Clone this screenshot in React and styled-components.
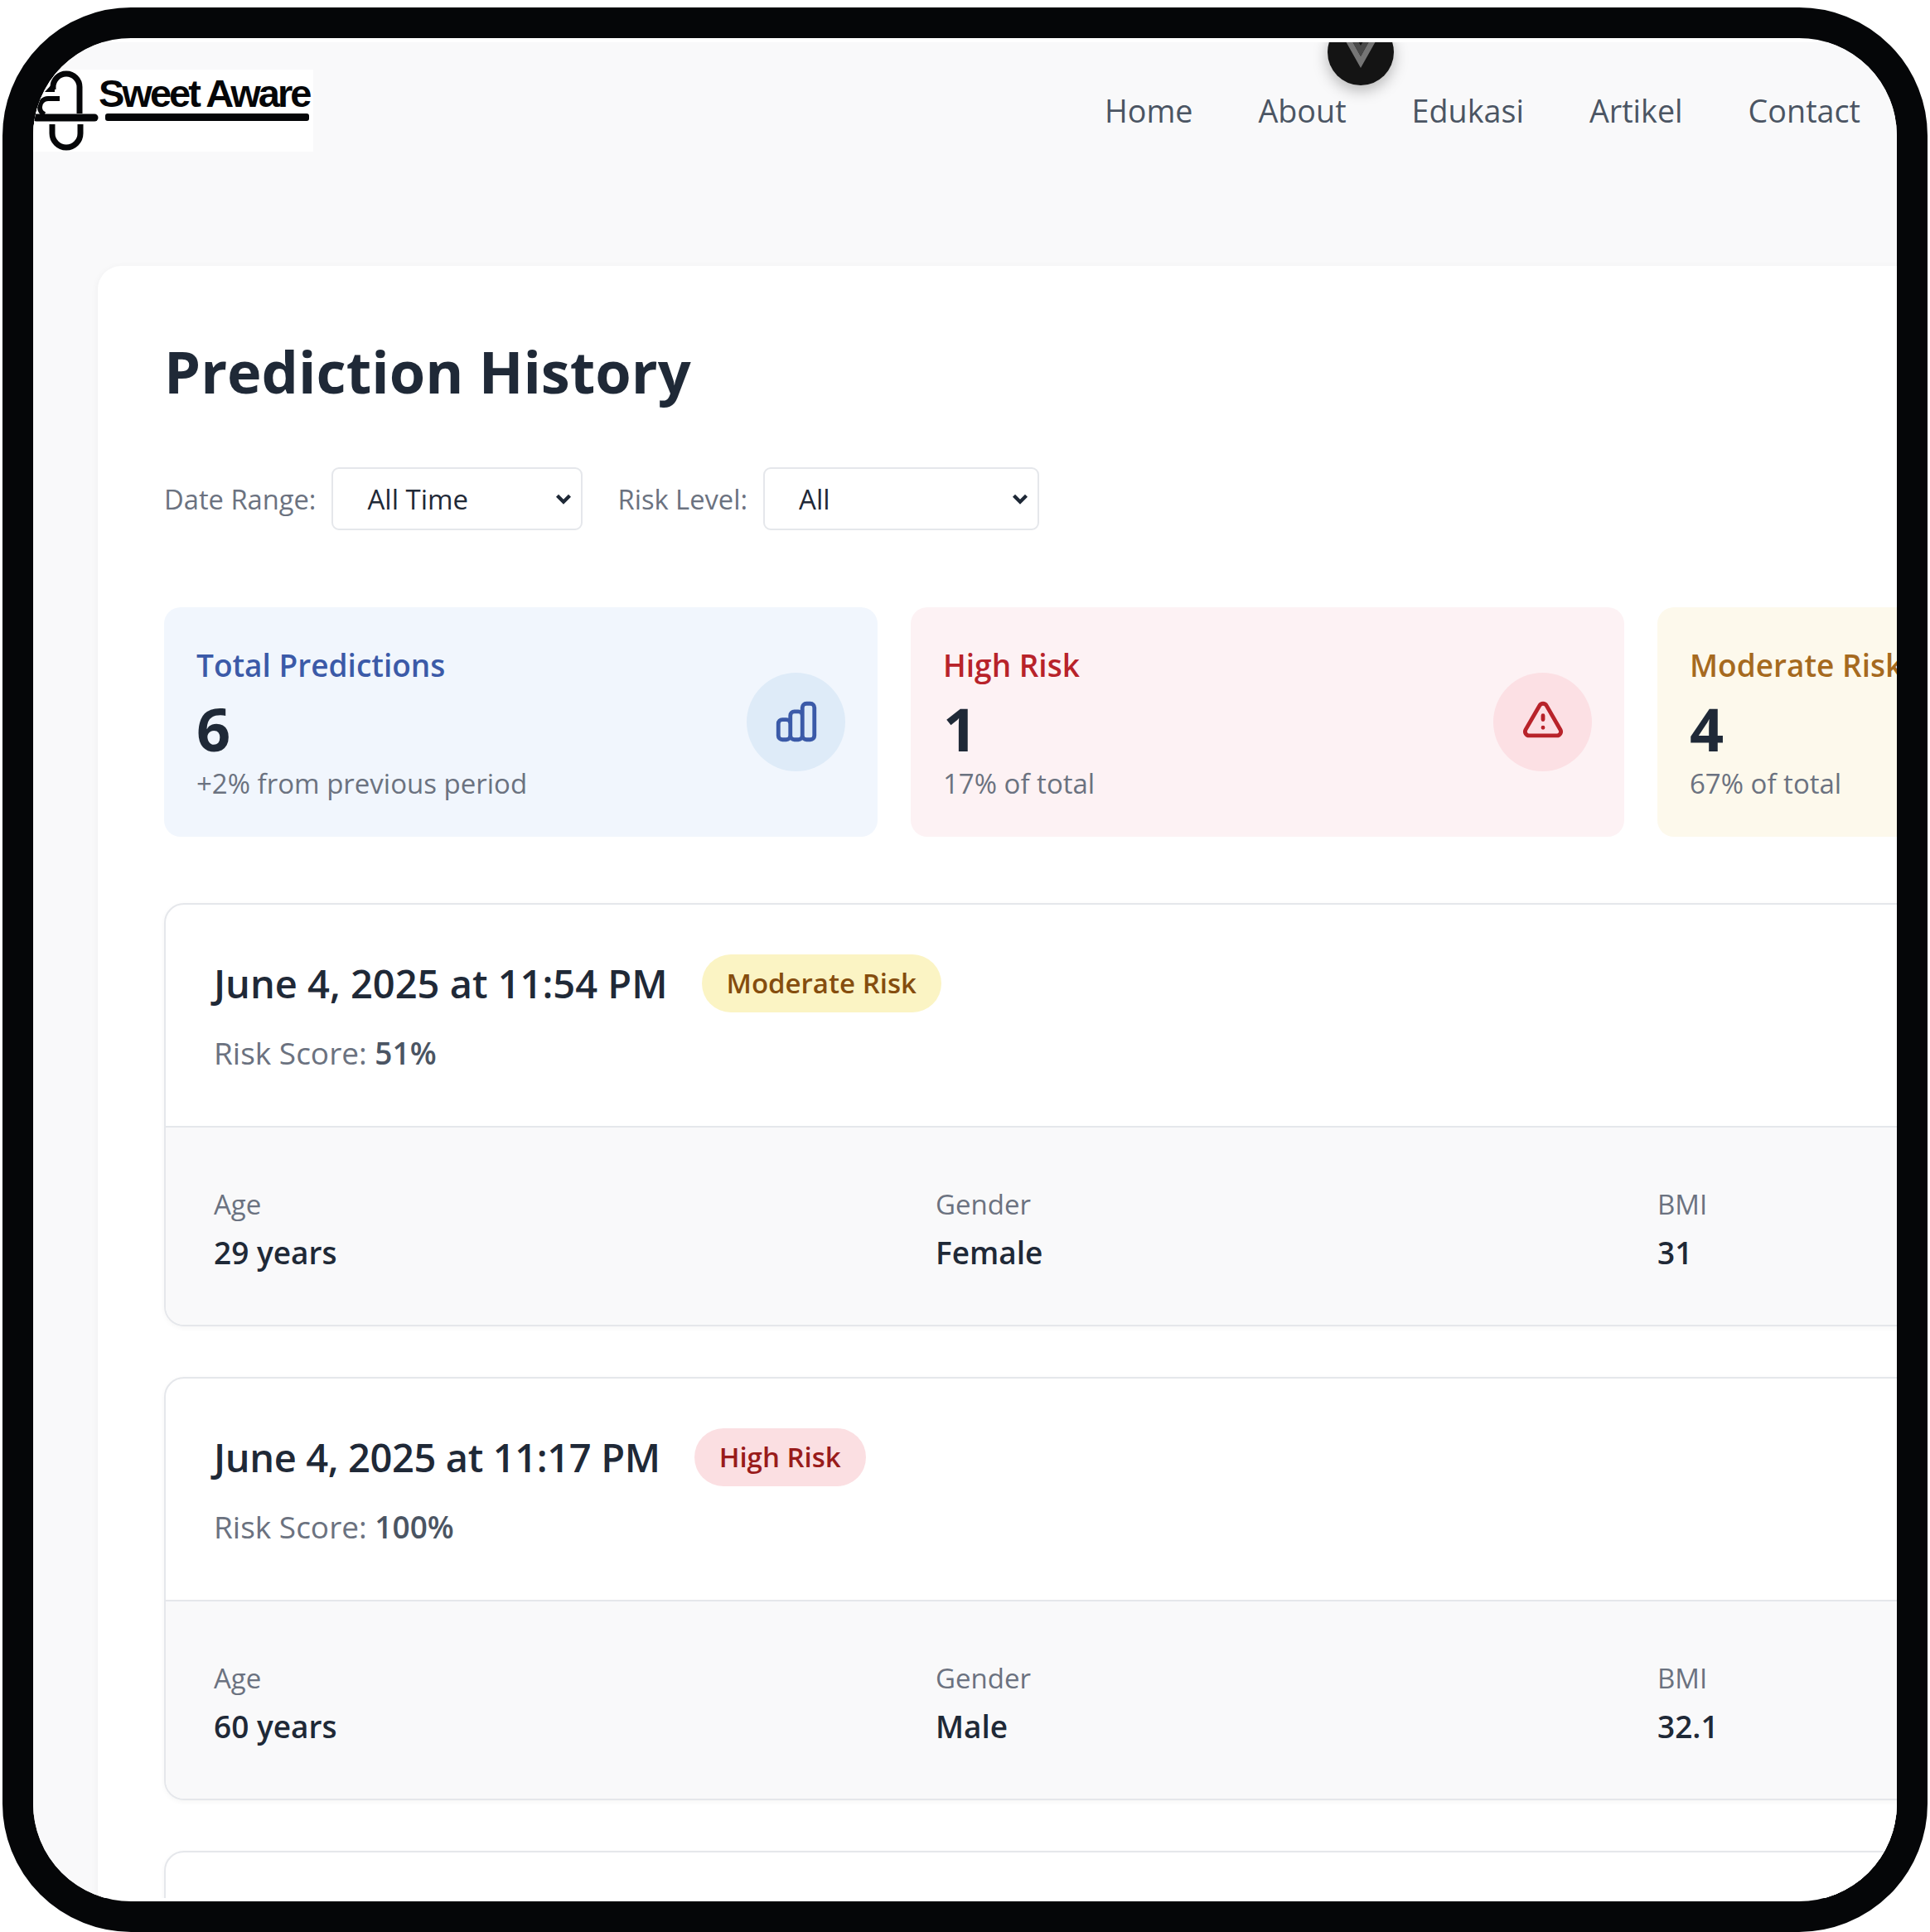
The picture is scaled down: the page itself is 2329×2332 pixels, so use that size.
import React from "react";
import styled, { createGlobalStyle } from "styled-components";

const GlobalStyle = createGlobalStyle`
  html, body {
    margin: 0;
    padding: 0;
    background: #fff;
    font-family: "Open Sans", "Noto Sans", sans-serif;
  }
  * {
    box-sizing: border-box;
  }
`;

const Frame = styled.div`
  width: 2323px;
  height: 2323px;
  margin: 9px 0 0 3px;
  border: 37px solid #050608;
  border-radius: 155px;
  background: #fff;
  padding: 5px 0 4px;
  overflow: hidden;
`;

const Screen = styled.div`
  position: relative;
  height: 100%;
  background: #f9f9fa;
  overflow: hidden;
`;

const DevToggle = styled.div`
  position: absolute;
  top: -28px;
  left: 1562px;
  width: 80px;
  height: 80px;
  border-radius: 50%;
  background: #141414;
  box-shadow: 0 6px 18px rgba(0, 0, 0, 0.28);
  display: flex;
  align-items: flex-end;
  justify-content: center;
  padding-bottom: 21px;
  z-index: 2;
`;

const Header = styled.header`
  display: flex;
  align-items: center;
  justify-content: space-between;
  height: 99px;
  margin: 33px 0 138px;
  padding-right: 44px;
`;

const Logo = styled.div`
  width: 338px;
  height: 99px;
  background: #fff;
  display: flex;
  align-items: flex-start;
`;

const LogoText = styled.div`
  margin-left: -2px;
  padding-top: 4px;
  font-family: "Liberation Sans", Arial, sans-serif;
  font-size: 47px;
  line-height: 50px;
  font-weight: 700;
  letter-spacing: -3px;
  color: #050608;
  white-space: nowrap;

  &::after {
    content: "";
    display: block;
    width: 246px;
    height: 9px;
    margin: -1px 0 0 8px;
    border-radius: 3px;
    background: #050608;
  }
`;

const Nav = styled.nav`
  display: flex;
  gap: 79px;
`;

const NavLink = styled.a`
  font-size: 37.7px;
  line-height: 50px;
  color: #4b5563;
  text-decoration: none;
`;

const MainCard = styled.main`
  width: 2823px;
  margin-left: 78px;
  padding: 87px 80px 80px;
  background: #fff;
  border-radius: 28px;
  box-shadow: 0 2px 10px rgba(0, 0, 0, 0.05);
`;

const Title = styled.h1`
  margin: 0 0 76px;
  font-size: 70.3px;
  line-height: 80px;
  font-weight: 700;
  color: #1f2937;
`;

const Filters = styled.div`
  display: flex;
  align-items: center;
  height: 76px;
  margin-bottom: 93px;
`;

const FilterLabel = styled.label`
  margin-right: 19px;
  font-size: 32.7px;
  color: #6b7280;
  white-space: nowrap;
`;

const Select = styled.select`
  appearance: none;
  width: ${(p) => p.$width}px;
  height: 76px;
  margin-right: 42px;
  padding: 0 0 0 41px;
  border: 2px solid #e5e7eb;
  border-radius: 9px;
  font-family: inherit;
  font-size: 33px;
  color: #1f2937;
  background: #fff url("data:image/svg+xml,%3Csvg xmlns='http://www.w3.org/2000/svg' viewBox='0 0 20 14'%3E%3Cpath d='M3 3l7 7 7-7' fill='none' stroke='%231f2937' stroke-width='4'/%3E%3C/svg%3E") no-repeat right 10px center / 22px 15px;
`;

const StatsGrid = styled.div`
  display: grid;
  grid-template-columns: repeat(3, 1fr);
  gap: 40px;
  margin-bottom: 80px;
`;

const StatCard = styled.section`
  display: flex;
  align-items: center;
  justify-content: space-between;
  padding: 46px 39px 42px;
  border-radius: 20px;
  background: ${(p) => p.$bg};
`;

const StatTitle = styled.div`
  font-size: 37px;
  line-height: 48px;
  font-weight: 600;
  color: ${(p) => p.$color};
`;

const StatValue = styled.div`
  margin: 8px 0 1px;
  font-size: 72px;
  line-height: 88px;
  font-weight: 700;
  color: #1f2937;
`;

const StatNote = styled.div`
  font-size: 33px;
  line-height: 44px;
  color: #6b7280;
`;

const StatIcon = styled.div`
  flex: none;
  width: 119px;
  height: 119px;
  margin-top: -5px;
  border-radius: 50%;
  display: flex;
  align-items: center;
  justify-content: center;
  background: ${(p) => p.$bg};
  color: ${(p) => p.$color};
`;

const List = styled.div`
  display: flex;
  flex-direction: column;
  gap: 61px;
`;

const PredictionCard = styled.article`
  min-height: 511px;
  border: 2px solid #e5e7eb;
  border-radius: 24px;
  background: #fff;
  box-shadow: 0 2px 6px rgba(0, 0, 0, 0.04);
  overflow: hidden;
`;

const CardHead = styled.div`
  padding: 60px 58px 64px;
  border-bottom: 2px solid #e5e7eb;
`;

const HeadRow = styled.div`
  display: flex;
  align-items: center;
  gap: 41px;
`;

const DateText = styled.h2`
  margin: 0;
  font-size: 47px;
  line-height: 70px;
  font-weight: 600;
  letter-spacing: ${(p) => p.$tracking}px;
  color: #1f2937;
`;

const Badge = styled.span`
  height: 70px;
  padding: 0 30px;
  border-radius: 35px;
  font-size: 33px;
  line-height: 70px;
  font-weight: 600;
  background: ${(p) => p.$bg};
  color: ${(p) => p.$color};
`;

const Score = styled.p`
  margin: 25px 0 0;
  font-size: 37px;
  line-height: 48px;
  color: #6b7280;

  strong {
    font-weight: 600;
    color: #4b5563;
  }
`;

const Details = styled.div`
  display: grid;
  grid-template-columns: repeat(3, 801px);
  gap: 70px;
  padding: 71px 58px 63px;
  background: #f9f9fa;
`;

const DetailLabel = styled.div`
  font-size: 33px;
  line-height: 44px;
  color: #6b7280;
`;

const DetailValue = styled.div`
  margin-top: 12px;
  font-size: 37px;
  line-height: 48px;
  font-weight: 600;
  color: #1f2937;
`;

const BarsIcon = () => (
  <svg width="58" height="58" viewBox="0 0 24 24" fill="none" stroke="currentColor" strokeWidth="2" strokeLinecap="round" strokeLinejoin="round">
    <path d="M9 19v-6a2 2 0 00-2-2H5a2 2 0 00-2 2v6a2 2 0 002 2h2a2 2 0 002-2zm0 0V9a2 2 0 012-2h2a2 2 0 012 2v10m-6 0a2 2 0 002 2h2a2 2 0 002-2m0 0V5a2 2 0 012-2h2a2 2 0 012 2v14a2 2 0 01-2 2h-2a2 2 0 01-2-2z" />
  </svg>
);

const AlertIcon = () => (
  <svg width="58" height="58" viewBox="0 0 24 24" fill="none" stroke="currentColor" strokeWidth="2" strokeLinecap="round" strokeLinejoin="round">
    <path d="M12 9v2m0 4h.01m-6.938 4h13.856c1.54 0 2.502-1.667 1.732-3L13.732 4c-.77-1.333-2.694-1.333-3.464 0L3.34 16c-.77 1.333.192 3 1.732 3z" />
  </svg>
);

const LogoMark = () => (
  <svg width="81" height="99" viewBox="40 84 81 99" fill="none" stroke="#050608" style={{ flex: "none" }}>
    <path d="M44 142H114" strokeWidth="9" strokeLinecap="round" />
    <path d="M63 150V161A17 17 0 0 0 97 161V150" strokeWidth="7" />
    <path d="M96 137V105A16 16 0 0 0 64 105V108" strokeWidth="7" />
    <path d="M72 119H58A10 10 0 0 0 48 129A9 9 0 0 0 54 138" strokeWidth="6" />
    <path d="M66 98V111H54Z" fill="#050608" stroke="none" />
  </svg>
);

const VueMark = () => (
  <svg width="36" height="32" viewBox="0 0 36 32">
    <path d="M0 0L18 32L36 0H28L18 18L8 0Z" fill="#757575" />
    <path d="M8 0L18 18L28 0H21L18 5L15 0Z" fill="#4a4a4a" />
  </svg>
);

const stats = [
  { title: "Total Predictions", value: "6", note: "+2% from previous period", bg: "#f1f6fd", color: "#3b5aa8", iconBg: "#deebf8", icon: <BarsIcon /> },
  { title: "High Risk", value: "1", note: "17% of total", bg: "#fdf2f4", color: "#b8232a", iconBg: "#fce0e4", icon: <AlertIcon /> },
  { title: "Moderate Risk", value: "4", note: "67% of total", bg: "#fdf9ec", color: "#a66a1f", iconBg: "#fbf1c7" },
];

const predictions = [
  { date: "June 4, 2025 at 11:54 PM", tracking: 0, risk: "Moderate Risk", bg: "#fbf4c4", color: "#854d0e", score: "51%", age: "29 years", gender: "Female", bmi: "31" },
  { date: "June 4, 2025 at 11:17 PM", tracking: -0.37, risk: "High Risk", bg: "#fbdfe2", color: "#991b1b", score: "100%", age: "60 years", gender: "Male", bmi: "32.1" },
];

const App = () => {
  return (
    <>
      <GlobalStyle />
      <Frame>
        <Screen>
          <DevToggle>
            <VueMark />
          </DevToggle>
          <Header>
            <Logo>
              <LogoMark />
              <LogoText>Sweet Aware</LogoText>
            </Logo>
            <Nav>
              {["Home", "About", "Edukasi", "Artikel", "Contact"].map((item) => (
                <NavLink key={item}>{item}</NavLink>
              ))}
            </Nav>
          </Header>
          <MainCard>
            <Title>Prediction History</Title>
            <Filters>
              <FilterLabel>Date Range:</FilterLabel>
              <Select $width={303} defaultValue="All Time">
                <option>All Time</option>
              </Select>
              <FilterLabel>Risk Level:</FilterLabel>
              <Select $width={333} defaultValue="All">
                <option>All</option>
              </Select>
            </Filters>
            <StatsGrid>
              {stats.map((s) => (
                <StatCard key={s.title} $bg={s.bg}>
                  <div>
                    <StatTitle $color={s.color}>{s.title}</StatTitle>
                    <StatValue>{s.value}</StatValue>
                    <StatNote>{s.note}</StatNote>
                  </div>
                  {s.icon && (
                    <StatIcon $bg={s.iconBg} $color={s.color}>
                      {s.icon}
                    </StatIcon>
                  )}
                </StatCard>
              ))}
            </StatsGrid>
            <List>
              {predictions.map((p) => (
                <PredictionCard key={p.date}>
                  <CardHead>
                    <HeadRow>
                      <DateText $tracking={p.tracking}>{p.date}</DateText>
                      <Badge $bg={p.bg} $color={p.color}>{p.risk}</Badge>
                    </HeadRow>
                    <Score>
                      Risk Score: <strong>{p.score}</strong>
                    </Score>
                  </CardHead>
                  <Details>
                    <div>
                      <DetailLabel>Age</DetailLabel>
                      <DetailValue>{p.age}</DetailValue>
                    </div>
                    <div>
                      <DetailLabel>Gender</DetailLabel>
                      <DetailValue>{p.gender}</DetailValue>
                    </div>
                    <div>
                      <DetailLabel>BMI</DetailLabel>
                      <DetailValue>{p.bmi}</DetailValue>
                    </div>
                  </Details>
                </PredictionCard>
              ))}
              <PredictionCard />
            </List>
          </MainCard>
        </Screen>
      </Frame>
    </>
  );
};

export default App;
